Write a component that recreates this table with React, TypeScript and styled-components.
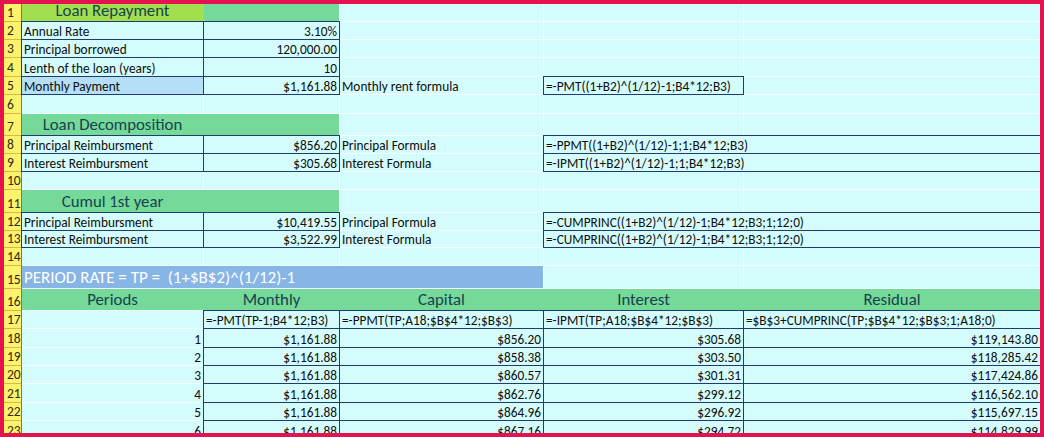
import React from "react";
import styled, { createGlobalStyle, css } from "styled-components";

const Global = createGlobalStyle`
  html, body { margin: 0; padding: 0; background: #e5124f; }
  body { font-family: "Carlito", Lato, "Liberation Sans", sans-serif; }
`;

const COLS = [17, 181, 135, 203, 199, 296];
const ROWS = [17, 17, 17, 18, 17, 18, 21, 17, 17, 17, 22, 17, 16, 17, 22, 21, 17, 18, 17, 17, 18, 17, 18];

const Frame = styled.div`
  box-sizing: border-box;
  width: 1044px;
  height: 437px;
  border: 4px solid #e5124f;
  overflow: hidden;
  background: #f1ffff;
`;

const Sheet = styled.div`
  display: grid;
  grid-template-columns: ${COLS.map((c) => c + "px").join(" ")};
  grid-template-rows: ${ROWS.map((r) => r + "px").join(" ")};
  gap: 1px;
  background: #f1ffff;
`;

const RowHead = styled.div`
  background: #fdf26c;
  color: #2e2a10;
  font-size: 13.5px;
  line-height: 1;
  display: flex;
  align-items: flex-end;
  padding: 0 0 2px 3px;
  box-sizing: border-box;
  box-shadow: 1px 0 0 #8c7a30, 0 1px 0 #d6b84c, 1px 1px 0 #8c7a30;
`;

type Fill = "cyan" | "green" | "lime" | "sky" | "blue";
const fills: Record<Fill, string> = {
  cyan: "#d4fcfc",
  green: "#75d999",
  lime: "#a2df4e",
  sky: "#b4dff6",
  blue: "#86b5e6",
};

type Tone = "text" | "heading" | "banner";

const Cell = styled.div<{
  $fill?: Fill;
  $align?: "left" | "right" | "center";
  $boxed?: boolean;
  $span?: number;
  $tone?: Tone;
  $bleed?: boolean;
}>`
  background: ${(p) => fills[p.$fill ?? "cyan"]};
  grid-column: span ${(p) => p.$span ?? 1};
  display: flex;
  align-items: flex-end;
  justify-content: ${(p) =>
    p.$align === "right" ? "flex-end" : p.$align === "center" ? "center" : "flex-start"};
  box-sizing: border-box;
  padding: 0 2px 1px 2px;
  white-space: nowrap;
  overflow: visible;
  min-width: 0;
  color: #0d0d0d;
  font-size: 13.3px;
  line-height: 1;
  ${(p) =>
    p.$boxed &&
    css`
      outline: 1px solid #1e3d6c;
      outline-offset: 0;
    `}
  ${(p) =>
    p.$bleed &&
    css`
      box-shadow: 1px 0 0 ${fills[p.$fill ?? "cyan"]};
    `}
  ${(p) =>
    p.$tone === "heading" &&
    css`
      color: #15434f;
      font-size: 16.8px;
      padding-bottom: 1px;
    `}
  ${(p) =>
    p.$tone === "banner" &&
    css`
      color: #ffffff;
      font-size: 17px;
      padding-left: 2px;
      padding-bottom: 2px;
    `}
`;

const Empty = ({ n = 1 }: { n?: number }) => (
  <>
    {Array.from({ length: n }).map((_, i) => (
      <Cell key={i} />
    ))}
  </>
);

const schedule = [
  ["$856.20", "$305.68", "$119,143.80"],
  ["$858.38", "$303.50", "$118,285.42"],
  ["$860.57", "$301.31", "$117,424.86"],
  ["$862.76", "$299.12", "$116,562.10"],
  ["$864.96", "$296.92", "$115,697.15"],
  ["$867.16", "$294.72", "$114,829.99"],
];

const inputs = [
  ["Annual Rate", "3.10%"],
  ["Principal borrowed", "120,000.00"],
  ["Lenth of the loan (years)", "10"],
];

export default function App() {
  let r = 0;
  const H = () => <RowHead>{++r}</RowHead>;
  return (
    <Frame>
      <Global />
      <Sheet>
        <H />
        <Cell $fill="lime" $align="center" $tone="heading" $bleed>
          Loan Repayment
        </Cell>
        <Cell $fill="green" />
        <Empty n={3} />

        {inputs.map(([label, value]) => (
          <React.Fragment key={label}>
            <H />
            <Cell $boxed>{label}</Cell>
            <Cell $boxed $align="right">
              {value}
            </Cell>
            <Empty n={3} />
          </React.Fragment>
        ))}

        <H />
        <Cell $boxed $fill="sky">
          Monthly Payment
        </Cell>
        <Cell $boxed $align="right">
          $1,161.88
        </Cell>
        <Cell>Monthly rent formula</Cell>
        <Cell $boxed>=-PMT((1+B2)^(1/12)-1;B4*12;B3)</Cell>
        <Cell />

        <H />
        <Empty n={5} />

        <H />
        <Cell $fill="green" $align="center" $tone="heading" $bleed>
          Loan Decomposition
        </Cell>
        <Cell $fill="green" />
        <Empty n={3} />

        <H />
        <Cell $boxed>Principal Reimbursment</Cell>
        <Cell $boxed $align="right">
          $856.20
        </Cell>
        <Cell>Principal Formula</Cell>
        <Cell $boxed $span={2}>
          =-PPMT((1+B2)^(1/12)-1;1;B4*12;B3)
        </Cell>

        <H />
        <Cell $boxed>Interest Reimbursment</Cell>
        <Cell $boxed $align="right">
          $305.68
        </Cell>
        <Cell>Interest Formula</Cell>
        <Cell $boxed $span={2}>
          =-IPMT((1+B2)^(1/12)-1;1;B4*12;B3)
        </Cell>

        <H />
        <Empty n={5} />

        <H />
        <Cell $fill="green" $align="center" $tone="heading" $bleed>
          Cumul 1st year
        </Cell>
        <Cell $fill="green" />
        <Empty n={3} />

        <H />
        <Cell $boxed>Principal Reimbursment</Cell>
        <Cell $boxed $align="right">
          $10,419.55
        </Cell>
        <Cell>Principal Formula</Cell>
        <Cell $boxed $span={2}>
          =-CUMPRINC((1+B2)^(1/12)-1;B4*12;B3;1;12;0)
        </Cell>

        <H />
        <Cell $boxed>Interest Reimbursment</Cell>
        <Cell $boxed $align="right">
          $3,522.99
        </Cell>
        <Cell>Interest Formula</Cell>
        <Cell $boxed $span={2}>
          =-CUMPRINC((1+B2)^(1/12)-1;B4*12;B3;1;12;0)
        </Cell>

        <H />
        <Empty n={5} />

        <H />
        <Cell $fill="blue" $span={3} $tone="banner">
          PERIOD RATE = TP =&nbsp; (1+$B$2)^(1/12)-1
        </Cell>
        <Empty n={2} />

        <H />
        <Cell $fill="green" $align="center" $tone="heading" $bleed>
          Periods
        </Cell>
        <Cell $fill="green" $align="center" $tone="heading" $bleed>
          Monthly
        </Cell>
        <Cell $fill="green" $align="center" $tone="heading" $bleed>
          Capital
        </Cell>
        <Cell $fill="green" $align="center" $tone="heading" $bleed>
          Interest
        </Cell>
        <Cell $fill="green" $align="center" $tone="heading">
          Residual
        </Cell>

        <H />
        <Cell />
        <Cell $boxed>=-PMT(TP-1;B4*12;B3)</Cell>
        <Cell $boxed>=-PPMT(TP;A18;$B$4*12;$B$3)</Cell>
        <Cell $boxed>=-IPMT(TP;A18;$B$4*12;$B$3)</Cell>
        <Cell $boxed>=$B$3+CUMPRINC(TP;$B$4*12;$B$3;1;A18;0)</Cell>

        {schedule.map(([cap, int, res], i) => (
          <React.Fragment key={i}>
            <H />
            <Cell $align="right">{i + 1}</Cell>
            <Cell $boxed $align="right">
              $1,161.88
            </Cell>
            <Cell $boxed $align="right">
              {cap}
            </Cell>
            <Cell $boxed $align="right">
              {int}
            </Cell>
            <Cell $boxed $align="right">
              {res}
            </Cell>
          </React.Fragment>
        ))}
      </Sheet>
    </Frame>
  );
}
